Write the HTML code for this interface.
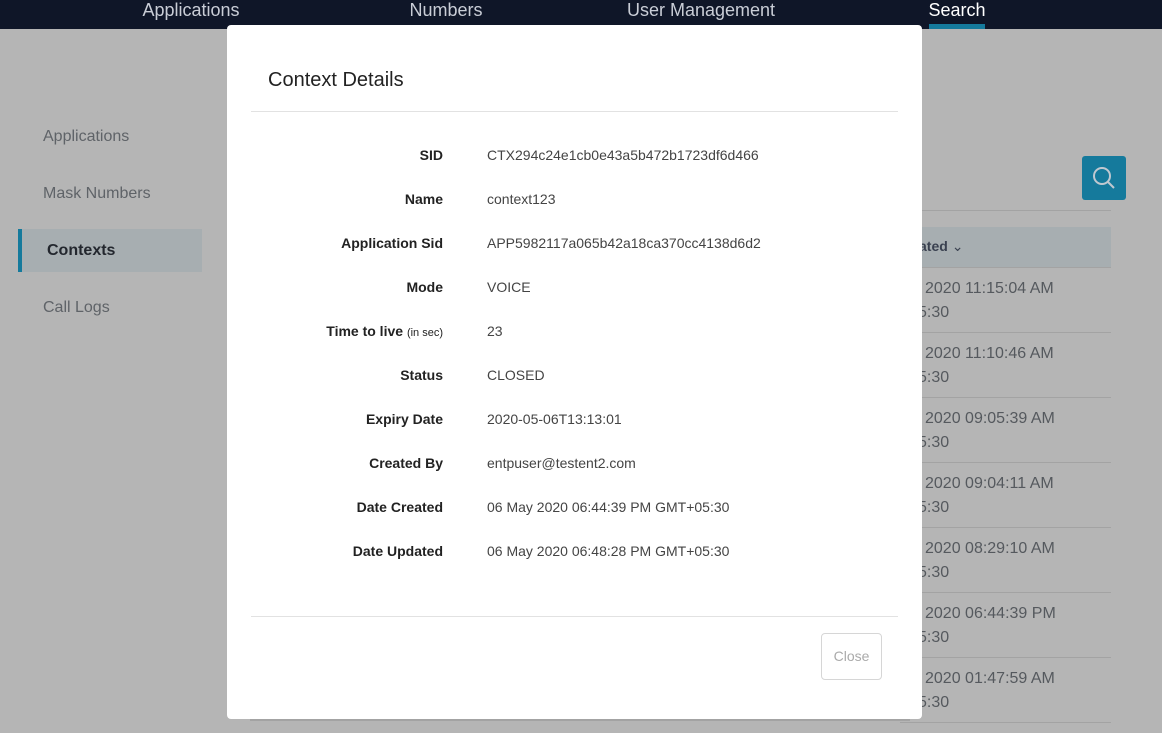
<!DOCTYPE html>
<html><head><style>
*{margin:0;padding:0;box-sizing:border-box}
body{width:1162px;height:733px;overflow:hidden;background:#b5b5b5;font-family:"Liberation Sans",sans-serif;position:relative}
.nav{position:absolute;left:0;top:0;width:1162px;height:29px;background:#0f1628}
.nav span{position:absolute;top:0;font-size:18px;color:#c9cdd6;transform:translateX(-50%);line-height:20px}
.side{position:absolute;left:43px;font-size:16px;color:#5f6368}
.row{position:absolute;font-size:16px;color:#55595e;line-height:24px;white-space:nowrap}
.hl{position:absolute;left:900px;width:211px;height:1px;background:#a3a3a3}
.modal{position:absolute;left:227px;top:25px;width:695px;height:694px;background:#fff;border-radius:4px}
.lab{position:absolute;right:479px;font-size:14px;font-weight:bold;color:#222;white-space:nowrap}
.lab small{font-weight:normal;font-size:11px}
.val{position:absolute;left:260px;font-size:14px;color:#444;white-space:nowrap}
</style></head><body>
<div class="nav">
<span style="left:191px">Applications</span>
<span style="left:446px">Numbers</span>
<span style="left:701px">User Management</span>
<span style="left:957px;color:#fff">Search</span>
<div style="position:absolute;left:929px;top:24px;width:56px;height:5px;background:#157a9c"></div>
</div>
<div class="side" style="top:128px">Applications</div>
<div class="side" style="top:185px">Mask Numbers</div>
<div style="position:absolute;left:18px;top:229px;width:184px;height:43px;background:#a7aeb1;border-left:4px solid #157a9c"></div>
<div class="side" style="top:242px;left:47px;font-weight:bold;color:#23272e">Contexts</div>
<div class="side" style="top:299px">Call Logs</div>
<div style="position:absolute;left:1082px;top:156px;width:44px;height:44px;background:#157a9c;border-radius:3px">
<svg width="44" height="44" viewBox="0 0 44 44"><circle cx="20" cy="20" r="8" fill="none" stroke="#c0c8d0" stroke-width="2"/><line x1="26" y1="26" x2="32" y2="32" stroke="#c0c8d0" stroke-width="2"/></svg></div>
<div class="hl" style="top:210px"></div>
<div style="position:absolute;left:900px;top:227px;width:211px;height:40px;background:#a7aeb1"></div>
<div style="position:absolute;left:919px;top:238px;font-size:14px;font-weight:bold;color:#3a4150">ated <span style="font-weight:normal">&#8964;</span></div>
<div class="hl" style="top:267px"></div>
<div class="row" style="top:277px;left:925px">2020 11:15:04 AM</div><div class="row" style="top:301px;left:918px">5:30</div><div class="hl" style="top:332px"></div>
<div class="row" style="top:342px;left:925px">2020 11:10:46 AM</div><div class="row" style="top:366px;left:918px">5:30</div><div class="hl" style="top:397px"></div>
<div class="row" style="top:407px;left:925px">2020 09:05:39 AM</div><div class="row" style="top:431px;left:918px">5:30</div><div class="hl" style="top:462px"></div>
<div class="row" style="top:472px;left:925px">2020 09:04:11 AM</div><div class="row" style="top:496px;left:918px">5:30</div><div class="hl" style="top:527px"></div>
<div class="row" style="top:537px;left:925px">2020 08:29:10 AM</div><div class="row" style="top:561px;left:918px">5:30</div><div class="hl" style="top:592px"></div>
<div class="row" style="top:602px;left:925px">2020 06:44:39 PM</div><div class="row" style="top:626px;left:918px">5:30</div><div class="hl" style="top:657px"></div>
<div class="row" style="top:667px;left:925px">2020 01:47:59 AM</div><div class="row" style="top:691px;left:918px">5:30</div><div class="hl" style="top:722px"></div>
<div style="position:absolute;left:250px;top:719px;width:660px;height:2px;background:#a3a3a3"></div>
<div class="modal">
<div style="position:absolute;left:41px;top:44px;font-size:20px;color:#222">Context Details</div>
<div style="position:absolute;left:24px;top:86px;width:647px;height:1px;background:#e2e2e2"></div>
<div class="lab" style="top:122px">SID</div><div class="val" style="top:122px">CTX294c24e1cb0e43a5b472b1723df6d466</div>
<div class="lab" style="top:166px">Name</div><div class="val" style="top:166px">context123</div>
<div class="lab" style="top:210px">Application Sid</div><div class="val" style="top:210px">APP5982117a065b42a18ca370cc4138d6d2</div>
<div class="lab" style="top:254px">Mode</div><div class="val" style="top:254px">VOICE</div>
<div class="lab" style="top:298px">Time to live <small>(in sec)</small></div><div class="val" style="top:298px">23</div>
<div class="lab" style="top:342px">Status</div><div class="val" style="top:342px">CLOSED</div>
<div class="lab" style="top:386px">Expiry Date</div><div class="val" style="top:386px">2020-05-06T13:13:01</div>
<div class="lab" style="top:430px">Created By</div><div class="val" style="top:430px">entpuser@testent2.com</div>
<div class="lab" style="top:474px">Date Created</div><div class="val" style="top:474px">06 May 2020 06:44:39 PM GMT+05:30</div>
<div class="lab" style="top:518px">Date Updated</div><div class="val" style="top:518px">06 May 2020 06:48:28 PM GMT+05:30</div>
<div style="position:absolute;left:24px;top:591px;width:647px;height:1px;background:#e2e2e2"></div>
<div style="position:absolute;left:594px;top:608px;width:61px;height:47px;border:1px solid #d6d6d6;border-radius:4px;font-size:14px;color:#aaa;text-align:center;line-height:45px">Close</div>
</div>
</body></html>
